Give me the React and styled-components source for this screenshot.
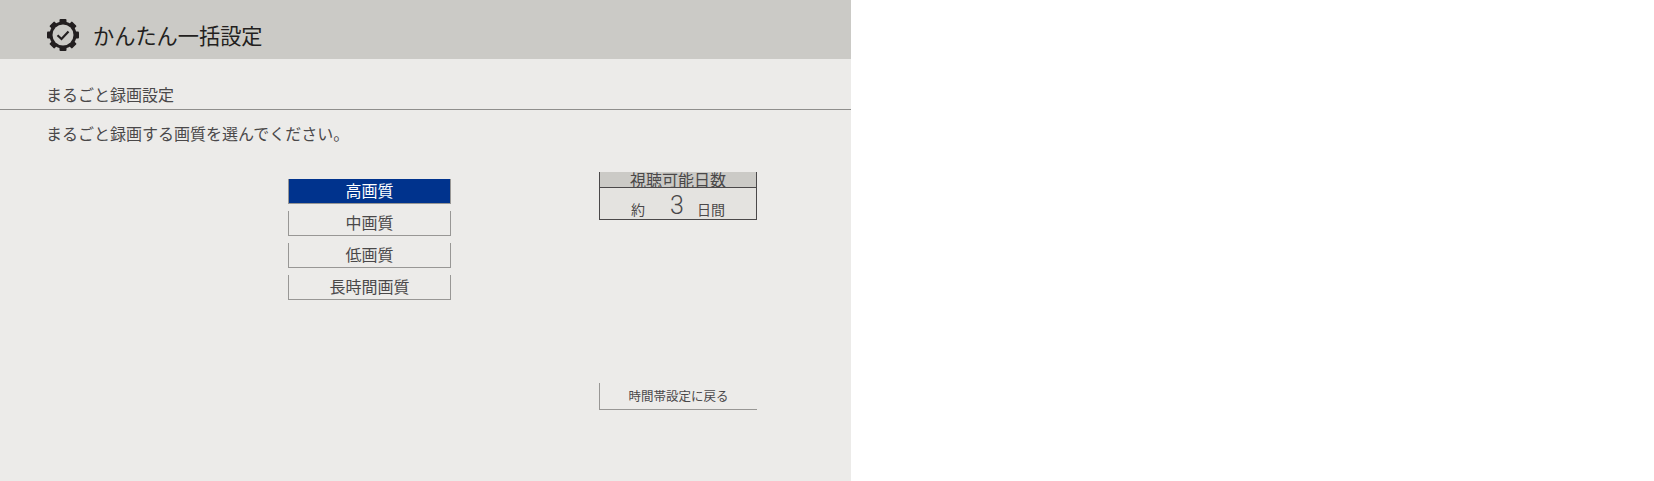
import React from "react";
import styled, { createGlobalStyle } from "styled-components";

const GlobalStyle = createGlobalStyle`
  html, body {
    margin: 0;
    padding: 0;
    background: #fff;
  }
  body {
    font-family: "Noto Sans CJK JP", "Liberation Sans", sans-serif;
  }
`;

const Panel = styled.div`
  width: 851px;
  height: 481px;
  background: #ecebe9;
  color: #4a4849;
  overflow: hidden;
`;

const Header = styled.header`
  box-sizing: border-box;
  height: 59px;
  background: #cbcac6;
  display: flex;
  align-items: center;
  padding: 11px 0 0 47px;
  gap: 14px;
`;

const Title = styled.h1`
  margin: 0;
  font-size: 21.2px;
  font-weight: 400;
  color: #231f20;
  line-height: 1;
`;

const SectionTitle = styled.h2`
  margin: 27px 0 0;
  height: 23px;
  padding-left: 46px;
  font-size: 16px;
  line-height: 17px;
  font-weight: 400;
  border-bottom: 1px solid #8f8e8c;
`;

const Lead = styled.p`
  margin: 12px 0 0;
  padding-left: 46px;
  font-size: 16px;
  line-height: 23px;
`;

const Content = styled.div`
  display: flex;
  align-items: flex-start;
  padding-left: 288px;
  margin-top: 27px;
`;

const Options = styled.div`
  display: flex;
  flex-direction: column;
  gap: 7px;
  width: 163px;
  margin-top: 7px;
`;

const Option = styled.div`
  box-sizing: border-box;
  height: 25px;
  border: 1px solid #989795;
  border-top: 0;
  background: ${(p) => (p.$active ? "#00338d" : "transparent")};
  color: ${(p) => (p.$active ? "#fff" : "#4a4849")};
  text-align: center;
  font-size: 16px;
  line-height: 23px;
`;

const Side = styled.div`
  width: 158px;
  margin-left: 148px;
  display: flex;
  flex-direction: column;
`;

const Days = styled.div`
  box-sizing: border-box;
  height: 48px;
  border: 1px solid #4a4849;
  border-top: 0;
  background: #e4e3e0;
`;

const DaysHead = styled.div`
  box-sizing: border-box;
  height: 16px;
  background: #cbcac6;
  border-bottom: 1px solid #4a4849;
  text-align: center;
  font-size: 16px;
  line-height: 15px;
`;

const DaysBody = styled.div`
  height: 31px;
  display: flex;
  align-items: flex-end;
  font-size: 14px;
  line-height: 20px;
  padding: 0 0 0 31px;
  box-sizing: border-box;
`;

const DaysValue = styled.span`
  box-sizing: border-box;
  width: 52px;
  padding-left: 12px;
  text-align: center;
  font-family: Roboto, "Liberation Sans", sans-serif;
  font-size: 25px;
  line-height: 26px;
  font-weight: 300;
`;

const BackButton = styled.div`
  box-sizing: border-box;
  height: 27px;
  margin-top: 163px;
  border-left: 1px solid #989795;
  border-bottom: 1px solid #989795;
  text-align: center;
  font-size: 12.5px;
  line-height: 25px;
`;

const GearIcon = () => (
  <svg width="32" height="32" viewBox="0 0 32 32" aria-hidden="true">
    <g fill="#231f20">
      <rect x="12.5" y="0" width="7" height="32" rx="1" />
      <rect x="12.5" y="0" width="7" height="32" rx="1" transform="rotate(45 16 16)" />
      <rect x="12.5" y="0" width="7" height="32" rx="1" transform="rotate(90 16 16)" />
      <rect x="12.5" y="0" width="7" height="32" rx="1" transform="rotate(135 16 16)" />
      <circle cx="16" cy="16" r="13.5" />
    </g>
    <circle cx="16" cy="16" r="10.5" fill="#cbcac6" />
    <path d="M10.5 16.2 L14.5 20 L21.5 12.5" fill="none" stroke="#231f20" strokeWidth="2.2" />
  </svg>
);

const options = ["高画質", "中画質", "低画質", "長時間画質"];

const App = () => (
  <Panel>
    <GlobalStyle />
    <Header>
      <GearIcon />
      <Title>かんたん一括設定</Title>
    </Header>
    <SectionTitle>まるごと録画設定</SectionTitle>
    <Lead>まるごと録画する画質を選んでください。</Lead>
    <Content>
      <Options>
        {options.map((label, i) => (
          <Option key={label} $active={i === 0}>
            {label}
          </Option>
        ))}
      </Options>
      <Side>
        <Days>
          <DaysHead>視聴可能日数</DaysHead>
          <DaysBody>
            <span>約</span>
            <DaysValue>3</DaysValue>
            <span>日間</span>
          </DaysBody>
        </Days>
        <BackButton>時間帯設定に戻る</BackButton>
      </Side>
    </Content>
  </Panel>
);

export default App;
